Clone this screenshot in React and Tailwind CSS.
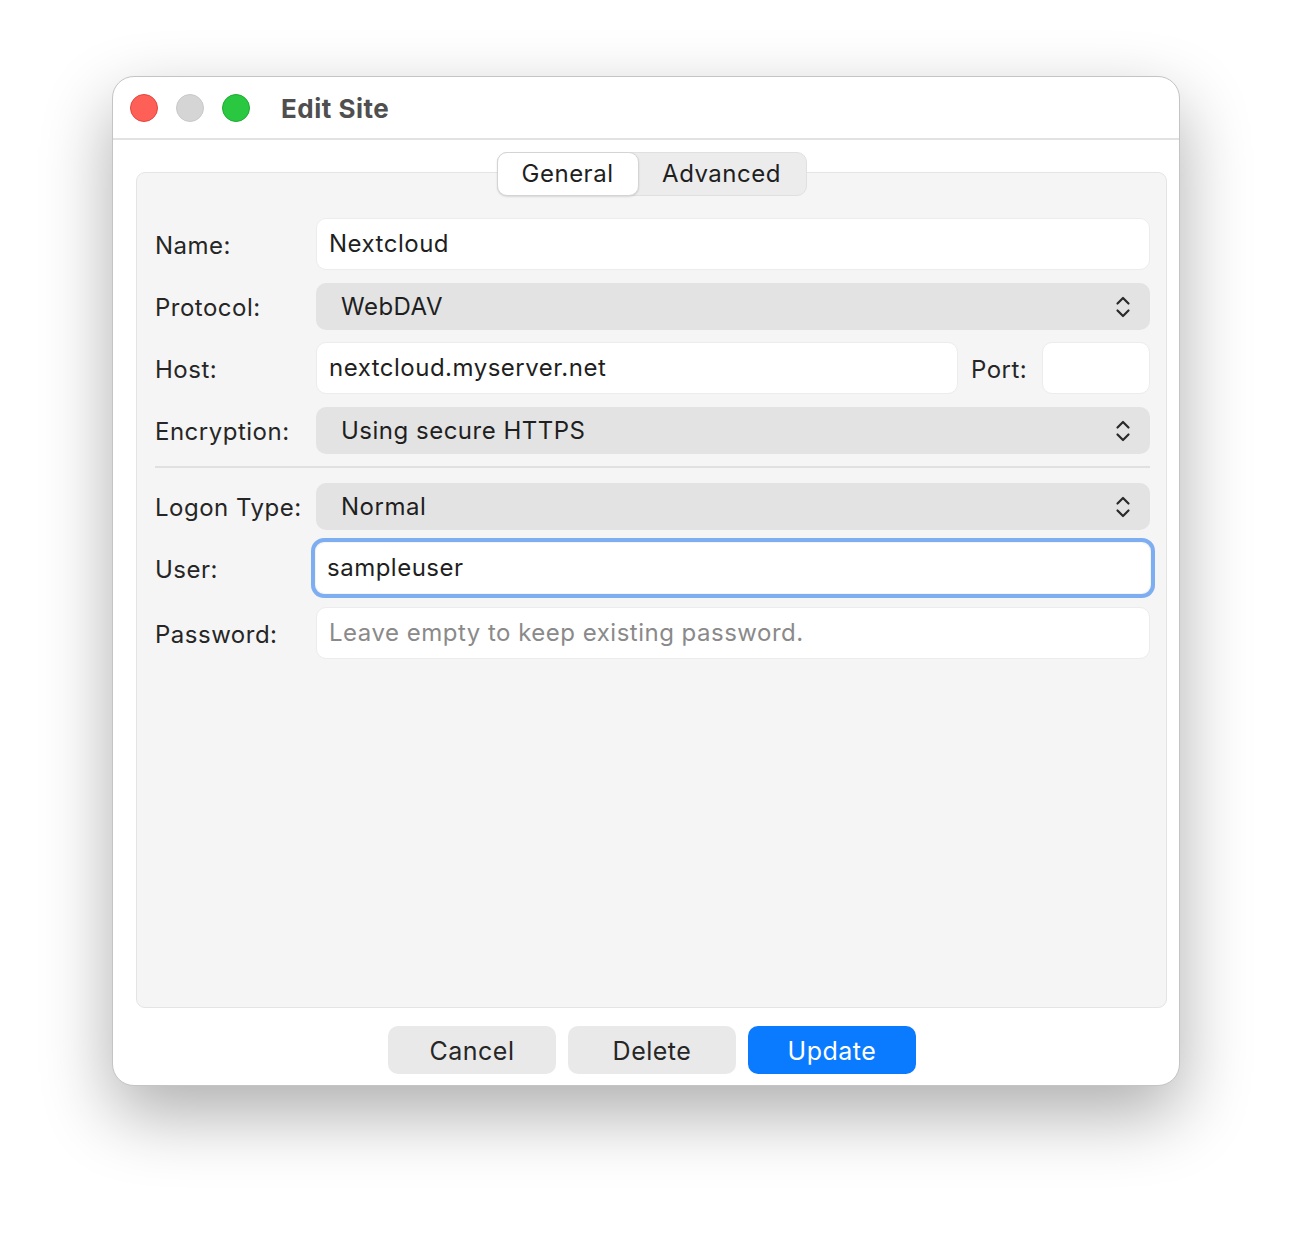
import React from 'react'

// Up/down chevrons used by the popup buttons
function Stepper() {
  return (
    <svg width="18" height="26" viewBox="0 0 18 26" fill="none" stroke="#2a2a2a" strokeWidth="2.2" strokeLinecap="round" strokeLinejoin="round">
      <path d="M3.5 9.5 L9 4 L14.5 9.5" />
      <path d="M3.5 16.5 L9 22 L14.5 16.5" />
    </svg>
  )
}

function Label({ children }) {
  return <div className="w-[161px] shrink-0 pt-[3px] text-[24px] text-[#262626]">{children}</div>
}

function TextField({ value, placeholder, className = '' }) {
  return (
    <div className={`h-[52px] flex items-center rounded-[10px] bg-white border border-[#ececec] px-[12px] text-[24px] ${className}`}>
      {value ? <span className="text-[#1f1f1f]">{value}</span> : <span className="text-[#8a8a8a]">{placeholder}</span>}
    </div>
  )
}

function Select({ value }) {
  return (
    <div className="flex-1 h-[47px] flex items-center justify-between rounded-[10px] bg-[#e3e3e3] pl-[25px] pr-[18px] text-[24px] text-[#1f1f1f]">
      <span>{value}</span>
      <Stepper />
    </div>
  )
}

export default function App() {
  return (
    <div className="min-h-[1234px] bg-white pt-[76px] pl-[112px] tracking-[0.5px]" style={{ fontFamily: 'Inter, "Noto Sans", sans-serif' }}>
      <div className="w-[1068px] h-[1010px] rounded-[22px] bg-white border border-[#c4c4c4] shadow-[0_28px_70px_rgba(0,0,0,0.32)] flex flex-col overflow-hidden">
        {/* Title bar */}
        <div className="h-[63px] shrink-0 flex items-center border-b-2 border-[#e2e2e2] pl-[17px]">
          <div className="flex gap-[18px]">
            <span className="w-[28px] h-[28px] rounded-full bg-[#fe5f57] border border-[#e2463f]" />
            <span className="w-[28px] h-[28px] rounded-full bg-[#d5d5d5] border border-[#c8c8c8]" />
            <span className="w-[28px] h-[28px] rounded-full bg-[#2ac840] border border-[#1eaa33]" />
          </div>
          <div className="ml-[31px] mt-[2px] text-[26px] font-bold text-[#4f4f4f]">Edit Site</div>
        </div>

        {/* Body */}
        <div className="flex-1 flex flex-col pl-[23px] pr-[12px] pt-[32px]">
          <div className="relative h-[836px] rounded-[9px] bg-[#f5f5f5] border border-[#e4e4e4] pl-[18px] pr-[16px] pt-[45px]">
            {/* Segmented tabs */}
            <div className="absolute top-[-21px] left-1/2 -translate-x-1/2 flex h-[44px] rounded-[10px] bg-[#ececec] border border-[#e0e0e0]">
              <div className="w-[142px] flex items-center justify-center rounded-[10px] bg-white border border-[#d4d4d4] shadow-[0_1px_2px_rgba(0,0,0,0.12)] text-[24px] text-[#1f1f1f] -m-px">General</div>
              <div className="w-[168px] flex items-center justify-center text-[24px] text-[#1f1f1f]">Advanced</div>
            </div>

            <div className="flex items-center">
              <Label>Name:</Label>
              <TextField value="Nextcloud" className="flex-1" />
            </div>
            <div className="flex items-center mt-[13px]">
              <Label>Protocol:</Label>
              <Select value="WebDAV" />
            </div>
            <div className="flex items-center mt-[12px]">
              <Label>Host:</Label>
              <TextField value="nextcloud.myserver.net" className="flex-1" />
              <div className="w-[84px] shrink-0 pl-[13px] pt-[3px] text-[24px] text-[#262626]">Port:</div>
              <TextField value="" className="w-[108px]" />
            </div>
            <div className="flex items-center mt-[13px]">
              <Label>Encryption:</Label>
              <Select value="Using secure HTTPS" />
            </div>
            <div className="h-[2px] bg-[#e0e0e0] mt-[12px]" />
            <div className="flex items-center mt-[15px]">
              <Label>Logon Type:</Label>
              <Select value="Normal" />
            </div>
            <div className="flex items-center mt-[8px]">
              <Label>User:</Label>
              <div className="flex-1 -mx-[5px] rounded-[13px] border-[4px] border-[#7eaef2] p-[1px]">
                <div className="h-[50px] flex items-center rounded-[9px] bg-white px-[11px] text-[24px] text-[#1f1f1f]">sampleuser</div>
              </div>
            </div>
            <div className="flex items-center mt-[9px]">
              <Label>Password:</Label>
              <TextField placeholder="Leave empty to keep existing password." className="flex-1 h-[51px]" />
            </div>
          </div>

          {/* Buttons */}
          <div className="flex justify-center gap-[12px] mt-[18px] pl-[1px]">
            <button className="w-[168px] h-[48px] rounded-[10px] bg-[#e9e9e9] text-[25px] text-[#262626] pt-[3px]">Cancel</button>
            <button className="w-[168px] h-[48px] rounded-[10px] bg-[#e9e9e9] text-[25px] text-[#262626] pt-[3px]">Delete</button>
            <button className="w-[168px] h-[48px] rounded-[10px] bg-[#0a7aff] text-[25px] text-white pt-[3px]">Update</button>
          </div>
        </div>
      </div>
    </div>
  )
}
